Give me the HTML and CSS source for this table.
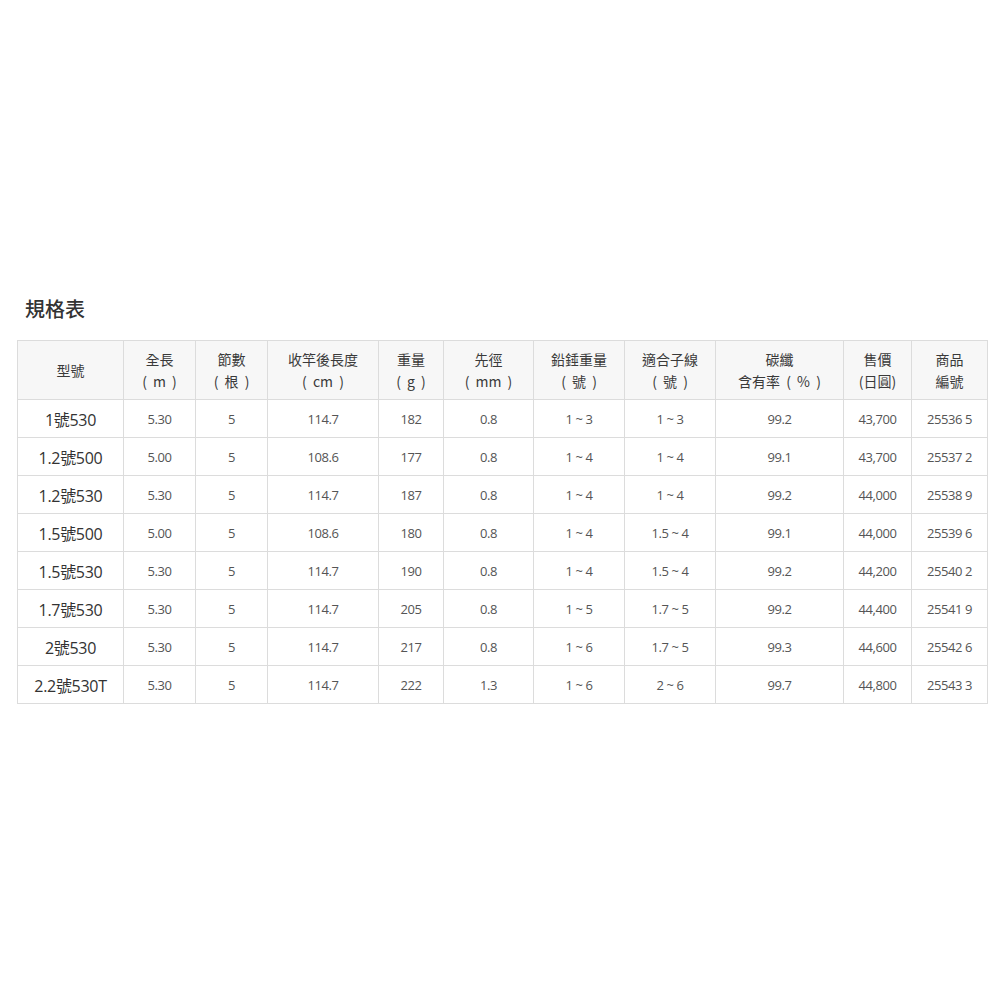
FILE: index.html
```html
<!DOCTYPE html>
<html lang="zh-Hant">
<head>
<meta charset="utf-8">
<link rel="stylesheet" href="styles.css">
</head>
<body>
<div class="page">
  <h2 class="title">規格表</h2>
  <table class="spec">
    <colgroup>
      <col class="c1"><col class="c2"><col class="c3"><col class="c4"><col class="c5"><col class="c6"><col class="c7"><col class="c8"><col class="c9"><col class="c10"><col class="c11">
    </colgroup>
    <thead>
      <tr>
        <th>型號</th>
        <th>全長<br><span class="u">( m )</span></th>
        <th>節數<br><span class="u">( 根 )</span></th>
        <th>收竿後長度<br><span class="u">( cm )</span></th>
        <th>重量<br><span class="u">( g )</span></th>
        <th>先徑<br><span class="u">( mm )</span></th>
        <th>鉛錘重量<br><span class="u">( 號 )</span></th>
        <th>適合子線<br><span class="u">( 號 )</span></th>
        <th>碳纖<br>含有率<span class="u"> ( % )</span></th>
        <th>售價<br>(日圓)</th>
        <th>商品<br>編號</th>
      </tr>
    </thead>
    <tbody>
      <tr><td class="model">1號530</td><td>5.30</td><td>5</td><td>114.7</td><td>182</td><td>0.8</td><td>1 ~ 3</td><td>1 ~ 3</td><td>99.2</td><td>43,700</td><td>25536 5</td></tr>
      <tr><td class="model">1.2號500</td><td>5.00</td><td>5</td><td>108.6</td><td>177</td><td>0.8</td><td>1 ~ 4</td><td>1 ~ 4</td><td>99.1</td><td>43,700</td><td>25537 2</td></tr>
      <tr><td class="model">1.2號530</td><td>5.30</td><td>5</td><td>114.7</td><td>187</td><td>0.8</td><td>1 ~ 4</td><td>1 ~ 4</td><td>99.2</td><td>44,000</td><td>25538 9</td></tr>
      <tr><td class="model">1.5號500</td><td>5.00</td><td>5</td><td>108.6</td><td>180</td><td>0.8</td><td>1 ~ 4</td><td>1.5 ~ 4</td><td>99.1</td><td>44,000</td><td>25539 6</td></tr>
      <tr><td class="model">1.5號530</td><td>5.30</td><td>5</td><td>114.7</td><td>190</td><td>0.8</td><td>1 ~ 4</td><td>1.5 ~ 4</td><td>99.2</td><td>44,200</td><td>25540 2</td></tr>
      <tr><td class="model">1.7號530</td><td>5.30</td><td>5</td><td>114.7</td><td>205</td><td>0.8</td><td>1 ~ 5</td><td>1.7 ~ 5</td><td>99.2</td><td>44,400</td><td>25541 9</td></tr>
      <tr><td class="model">2號530</td><td>5.30</td><td>5</td><td>114.7</td><td>217</td><td>0.8</td><td>1 ~ 6</td><td>1.7 ~ 5</td><td>99.3</td><td>44,600</td><td>25542 6</td></tr>
      <tr><td class="model">2.2號530T</td><td>5.30</td><td>5</td><td>114.7</td><td>222</td><td>1.3</td><td>1 ~ 6</td><td>2 ~ 6</td><td>99.7</td><td>44,800</td><td>25543 3</td></tr>
    </tbody>
  </table>
</div>
</body>
</html>
```

FILE: styles.css
```css
html, body {
  margin: 0;
  padding: 0;
  background: #ffffff;
}
body {
  font-family: "Open Sans", "Noto Sans CJK TC", sans-serif;
  color: #444;
}
.page {
  padding: 296px 13px 0 17px;
}
.title {
  margin: 0 0 18px 8px;
  font-family: "Noto Sans CJK TC", sans-serif;
  font-size: 20px;
  font-weight: 500;
  line-height: 26px;
  color: #333;
}
.spec {
  border-collapse: collapse;
  table-layout: fixed;
  width: 970px;
}
.c1 { width: 106px; }
.c2 { width: 72px; }
.c3 { width: 72px; }
.c4 { width: 111px; }
.c5 { width: 65px; }
.c6 { width: 90px; }
.c7 { width: 91px; }
.c8 { width: 91px; }
.c9 { width: 128px; }
.c10 { width: 68px; }
.c11 { width: 76px; }
.spec th, .spec td {
  border: 1px solid #dcdcdc;
  text-align: center;
  padding: 0;
}
.spec th {
  height: 58px;
  background: #f7f7f7;
  font-family: "Noto Sans CJK TC", sans-serif;
  font-weight: 400;
  font-size: 14px;
  line-height: 22px;
  color: #3a3a3a;
}
.spec th .u {
  word-spacing: 3px;
  white-space: pre;
}
.spec td {
  height: 37px;
  font-size: 13px;
  letter-spacing: -0.4px;
  color: #555;
  font-family: "Open Sans", "Noto Sans CJK TC", sans-serif;
}
.spec td.model {
  font-size: 16px;
  color: #333;
  letter-spacing: -0.3px;
}
```
